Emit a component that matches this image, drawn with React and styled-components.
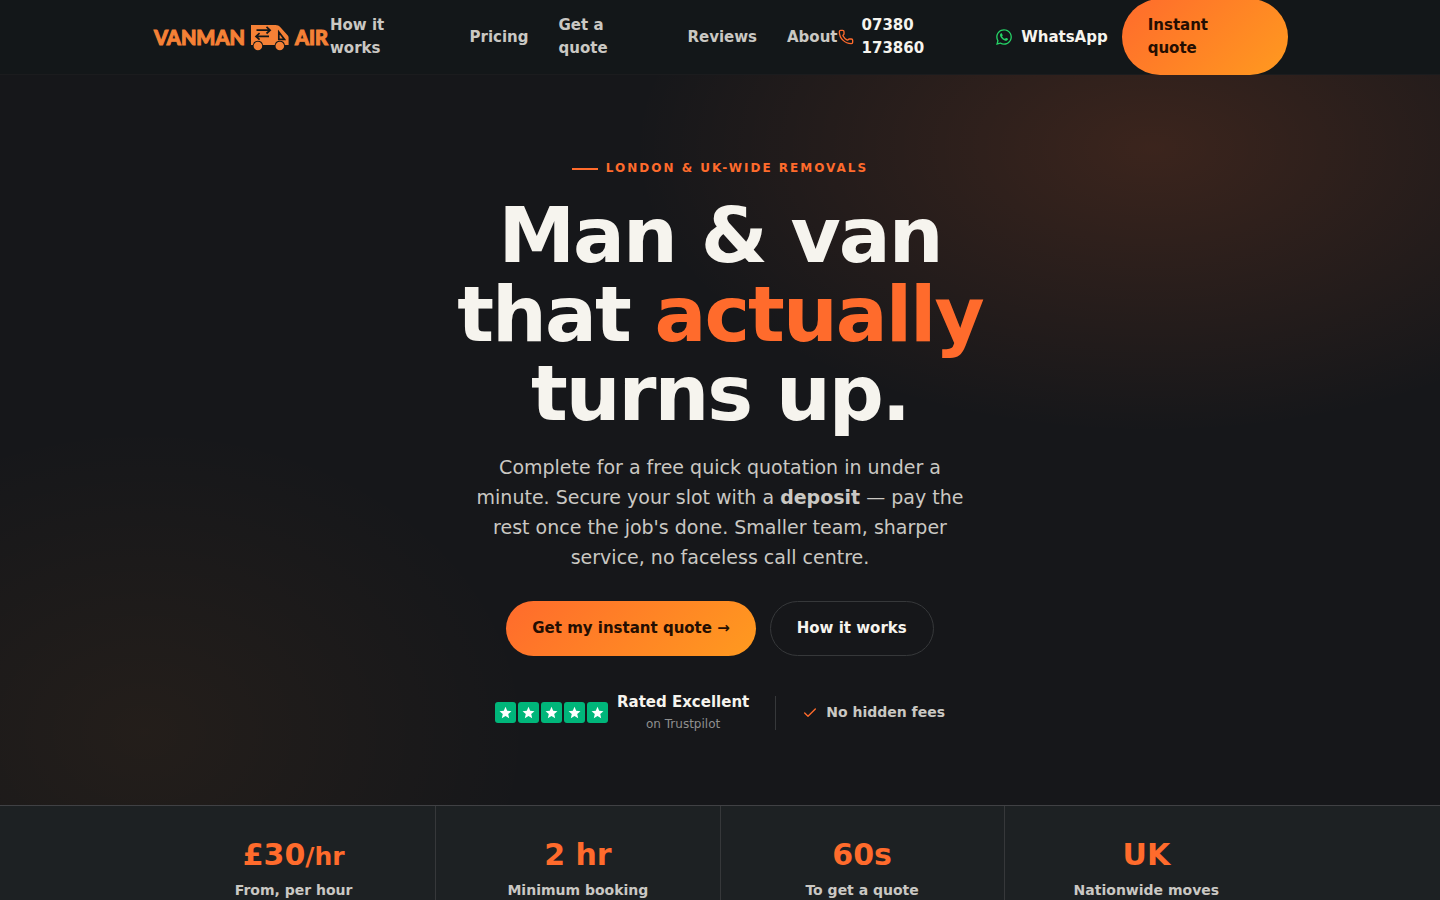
import React from 'react';
import styled, { createGlobalStyle } from 'styled-components';
import { Phone, Check } from 'lucide-react';
import { FaWhatsapp } from 'react-icons/fa';

const GlobalStyle = createGlobalStyle`
  * {
    box-sizing: border-box;
  }
  body {
    margin: 0;
    background: #16171a;
    color: #f6f4ee;
    font-family: "DejaVu Sans", sans-serif;
    font-size: 15px;
    line-height: 23px;
  }
  a {
    color: inherit;
    text-decoration: none;
  }
`;

const Container = styled.div`
  max-width: 1180px;
  margin: 0 auto;
  padding: 0 22px;
`;

const Header = styled.header`
  background: #131719;
  border-bottom: 1px solid #1b1c1e;
`;

const HeaderRow = styled(Container)`
  display: flex;
  align-items: center;
  justify-content: space-between;
  height: 74px;
`;

const Logo = styled.a`
  display: flex;
  flex: none;
  align-items: center;
  justify-content: space-between;
  width: 178px;
  padding: 0 2px;
  color: #f58136;
  font-family: Lato, sans-serif;
  font-size: 20px;
  font-weight: 900;
  -webkit-text-stroke: 1px #f58136;
`;

const Nav = styled.nav`
  display: flex;
  align-items: center;
  gap: 30px;
  color: #cac8c3;
  font-weight: 600;
`;

const Actions = styled.div`
  display: flex;
  align-items: center;
  gap: 14px;
`;

const Contact = styled.a`
  display: flex;
  align-items: center;
  gap: 8px;
  font-weight: 600;

  svg {
    flex: none;
    color: ${({ $icon }) => $icon};
  }
`;

const Button = styled.button`
  padding: 16px 26px;
  border: 0;
  border-radius: 999px;
  background: linear-gradient(135deg, #ff6b2c, #ff9a1f);
  color: #240e02;
  font: inherit;
  font-weight: 700;
  text-align: left;
  cursor: pointer;
`;

const GhostButton = styled(Button)`
  padding: 15px 26px;
  border: 1px solid #36383a;
  background: transparent;
  color: #f6f4ee;
`;

const NavButton = styled(Button)`
  padding: 15px 26px;
`;

const Hero = styled.section`
  padding: 82px 22px 71px;
  background:
    radial-gradient(60% 65% at 80% 10%, rgba(255, 107, 44, 0.16), transparent 60%),
    radial-gradient(45% 70% at 10% 90%, rgba(255, 140, 31, 0.06), transparent 60%);
`;

const HeroInner = styled.div`
  display: flex;
  flex-direction: column;
  align-items: center;
  max-width: 560px;
  margin: 0 auto;
  text-align: center;
`;

const Eyebrow = styled.div`
  display: flex;
  align-items: center;
  gap: 8px;
  color: #ff6b2c;
  font-size: 12px;
  font-weight: 700;
  letter-spacing: 2px;
  text-transform: uppercase;

  &::before {
    content: "";
    width: 26px;
    height: 2px;
    background: #ff6b2c;
  }
`;

const Title = styled.h1`
  margin: 16px 0 19px;
  font-size: 77px;
  font-weight: 800;
  line-height: 79px;
  letter-spacing: -2px;
`;

const Accent = styled.span`
  color: #ff6b2c;
`;

const Lead = styled.p`
  max-width: 500px;
  margin: 0 0 29px;
  color: #cac8c3;
  font-size: 19px;
  line-height: 30px;
`;

const ButtonRow = styled.div`
  display: flex;
  gap: 14px;
`;

const Trust = styled.div`
  display: flex;
  align-items: center;
  gap: 26px;
  margin-top: 35px;
`;

const Rating = styled.a`
  display: flex;
  align-items: center;
  gap: 9px;
`;

const Stars = styled.span`
  display: flex;
  gap: 2px;
`;

const StarBox = styled.span`
  display: grid;
  place-items: center;
  width: 21px;
  height: 21px;
  border-radius: 3px;
  background: #00b67a;
`;

const RatingText = styled.span`
  display: flex;
  flex-direction: column;
  font-weight: 700;
`;

const RatingSource = styled.small`
  color: #8f8f8f;
  font-size: 12px;
  font-weight: 400;
  line-height: 20px;
`;

const Divider = styled.span`
  width: 1px;
  height: 34px;
  background: #36383a;
`;

const Perk = styled.span`
  display: flex;
  align-items: center;
  gap: 8px;
  color: #cac8c3;
  font-size: 14px;
  font-weight: 600;

  svg {
    color: #ff6b2c;
  }
`;

const Stats = styled.section`
  border-top: 1px solid #404144;
  border-bottom: 1px solid #404144;
  background: #1d2123;
`;

const StatGrid = styled.div`
  display: grid;
  grid-template-columns: repeat(4, 1fr);
  gap: 1px;
  background: #36383a;
`;

const Stat = styled.div`
  padding: 31px 20px;
  background: #1d2123;
  text-align: center;
`;

const StatValue = styled.div`
  color: #ff6b2c;
  font-size: 30px;
  font-weight: 800;
  line-height: 36px;

  small {
    font-size: 25px;
    line-height: 1;
  }
`;

const StatLabel = styled.div`
  margin-top: 6px;
  color: #cac8c3;
  font-size: 14px;
  font-weight: 600;
`;

const links = ['How it works', 'Pricing', 'Get a quote', 'Reviews', 'About'];

const stats = [
  { value: '£30', unit: '/hr', label: 'From, per hour' },
  { value: '2 hr', label: 'Minimum booking' },
  { value: '60s', label: 'To get a quote' },
  { value: 'UK', label: 'Nationwide moves' },
];

function VanIcon() {
  return (
    <svg width="40" height="27" viewBox="0 0 40 27" aria-hidden="true">
      <path
        fill="currentColor"
        d="M1 1h24.5c2 0 3.6.8 4.9 2.2l7.4 8.4c.5.6.8 1.2.8 2V21h-3.7a5.2 5.2 0 0 0-10.2 0H13a5.2 5.2 0 0 0-10.2 0H1z"
      />
      <circle cx="7.9" cy="22" r="4.3" fill="currentColor" />
      <circle cx="29.8" cy="22" r="4.3" fill="currentColor" />
      <path
        fill="none"
        stroke="#131719"
        strokeWidth="1.7"
        d="M6.5 6.2h13M16.5 2.9l3.6 3.3-3.6 3.3M19 12.4H6.5M9.6 9.1 6 12.4l3.6 3.3M28.8 8v7.4h5.7z"
      />
    </svg>
  );
}

function Star() {
  return (
    <StarBox>
      <svg width="13" height="13" viewBox="0 0 24 24" fill="#fff" aria-hidden="true">
        <path d="M12 1.5l3.1 7.3 7.9.7-6 5.2 1.8 7.8-6.8-4.1-6.8 4.1L7 14.7 1 9.5l7.9-.7z" />
      </svg>
    </StarBox>
  );
}

function App() {
  return (
    <>
      <GlobalStyle />
      <Header>
        <HeaderRow>
          <Logo href="#">
            <span>VANMAN</span>
            <VanIcon />
            <span>AIR</span>
          </Logo>
          <Nav>
            {links.map((link) => (
              <a key={link} href="#">{link}</a>
            ))}
          </Nav>
          <Actions>
            <Contact href="tel:07380173860" $icon="#ff6b2c">
              <Phone size={16} />
              07380 173860
            </Contact>
            <Contact href="#" $icon="#25d366">
              <FaWhatsapp size={18} />
              WhatsApp
            </Contact>
            <NavButton>Instant quote</NavButton>
          </Actions>
        </HeaderRow>
      </Header>

      <Hero>
        <HeroInner>
          <Eyebrow>London &amp; UK-wide removals</Eyebrow>
          <Title>
            Man &amp; van that <Accent>actually</Accent> turns up.
          </Title>
          <Lead>
            Complete for a free quick quotation in under a minute. Secure your slot with
            a <strong>deposit</strong> — pay the rest once the job's done. Smaller team,
            sharper service, no faceless call centre.
          </Lead>
          <ButtonRow>
            <Button>Get my instant quote →</Button>
            <GhostButton>How it works</GhostButton>
          </ButtonRow>
          <Trust>
            <Rating href="#">
              <Stars>
                {[1, 2, 3, 4, 5].map((n) => (
                  <Star key={n} />
                ))}
              </Stars>
              <RatingText>
                Rated Excellent
                <RatingSource>on Trustpilot</RatingSource>
              </RatingText>
            </Rating>
            <Divider />
            <Perk>
              <Check size={16} />
              No hidden fees
            </Perk>
          </Trust>
        </HeroInner>
      </Hero>

      <Stats>
        <Container>
          <StatGrid>
            {stats.map(({ value, unit, label }) => (
              <Stat key={label}>
                <StatValue>
                  {value}
                  {unit && <small>{unit}</small>}
                </StatValue>
                <StatLabel>{label}</StatLabel>
              </Stat>
            ))}
          </StatGrid>
        </Container>
      </Stats>
    </>
  );
}

export default App;
